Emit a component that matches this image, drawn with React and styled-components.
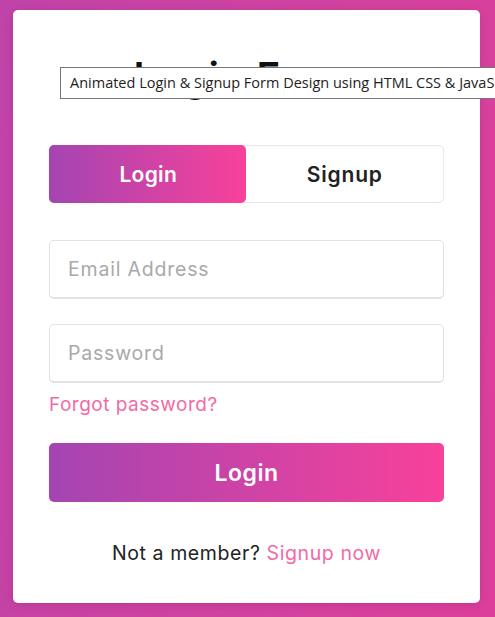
import React, { useState } from "react";
import styled, { createGlobalStyle } from "styled-components";

const GlobalStyle = createGlobalStyle`
  html, body {
    margin: 0;
    padding: 0;
    overflow: hidden;
  }
  body {
    font-family: "Inter", "Open Sans", sans-serif;
  }
`;

const Page = styled.div`
  position: relative;
  width: 495px;
  height: 617px;
  overflow: hidden;
  box-sizing: border-box;
  padding: 10px 15px 14px 13px;
  background: linear-gradient(100deg, #c043a8 0%, #d2429f 60%, #dc3f9b 100%);
`;

const Card = styled.div`
  height: 593px;
  box-sizing: border-box;
  background: #fff;
  border-radius: 5px;
  padding: 37px 36px 0;
  display: flex;
  flex-direction: column;
  box-shadow: 0 2px 8px rgba(80, 0, 60, 0.15);
`;

const Title = styled.h1`
  margin: 0;
  text-align: center;
  font-size: 40px;
  font-weight: 600;
  line-height: 60px;
  color: #111;
  letter-spacing: 1px;
`;

const Tabs = styled.div`
  position: relative;
  margin-top: 38px;
  height: 58px;
  border: 1px solid #e7e7ec;
  border-radius: 5px;
  display: grid;
  grid-template-columns: 1fr 1fr;
  box-sizing: border-box;
`;

const Slider = styled.div`
  position: absolute;
  top: -1px;
  bottom: -1px;
  left: -1px;
  width: 50%;
  border-radius: 5px;
  background: linear-gradient(90deg, #a445b2, #f8419a);
`;

const Tab = styled.button`
  position: relative;
  z-index: 1;
  border: 0;
  background: none;
  font-family: inherit;
  font-size: 21px;
  font-weight: 600;
  letter-spacing: ${(p) => (p.$active ? 0.3 : 0.8)}px;
  color: ${(p) => (p.$active ? "#fff" : "#222")};
  cursor: pointer;
`;

const Field = styled.input`
  margin-top: ${(p) => p.$gap || 25}px;
  height: 59px;
  box-sizing: border-box;
  border: 1px solid #e2e2e6;
  border-bottom-width: 2px;
  border-radius: 5px;
  padding: 0 18px;
  font-family: inherit;
  font-size: 19.5px;
  letter-spacing: 0.8px;
  color: #333;
  outline: none;
  &::placeholder {
    color: #a9a9a9;
  }
`;

const Forgot = styled.a`
  margin-top: 10px;
  font-size: 19px;
  letter-spacing: 0.5px;
  line-height: 24px;
  color: #f26aa5;
  text-decoration: none;
`;

const Submit = styled.button`
  margin-top: 26px;
  height: 59px;
  border: 0;
  border-radius: 5px;
  background: linear-gradient(90deg, #a445b2, #f8419a);
  color: #fff;
  font-family: inherit;
  font-size: 23px;
  font-weight: 600;
  letter-spacing: 0.5px;
`;

const Footer = styled.p`
  margin: 39px 0 0;
  text-align: center;
  font-size: 19.5px;
  letter-spacing: 0.6px;
  color: #222;
  line-height: 24px;
`;

const FooterLink = styled.a`
  color: #f26aa5;
  text-decoration: none;
`;

const Tooltip = styled.div`
  position: absolute;
  left: 60px;
  top: 67px;
  height: 32px;
  box-sizing: border-box;
  padding: 0 9px;
  border: 1px solid #767676;
  background: #fff;
  color: #222;
  font-family: "Open Sans", sans-serif;
  font-size: 14.5px;
  line-height: 30px;
  white-space: nowrap;
`;

export default function App() {
  const [tab, setTab] = useState("login");
  return (
    <>
      <GlobalStyle />
      <Page>
        <Card>
          <Title>Login Form</Title>
          <Tabs>
            <Slider />
            <Tab $active={tab === "login"} onClick={() => setTab("login")}>
              Login
            </Tab>
            <Tab $active={tab === "signup"} onClick={() => setTab("signup")}>
              Signup
            </Tab>
          </Tabs>
          <Field $gap={37} placeholder="Email Address" />
          <Field placeholder="Password" type="password" />
          <Forgot href="#">Forgot password?</Forgot>
          <Submit>Login</Submit>
          <Footer>
            Not a member? <FooterLink href="#">Signup now</FooterLink>
          </Footer>
        </Card>
        <Tooltip>Animated Login &amp; Signup Form Design using HTML CSS &amp; JavaScript</Tooltip>
      </Page>
    </>
  );
}
